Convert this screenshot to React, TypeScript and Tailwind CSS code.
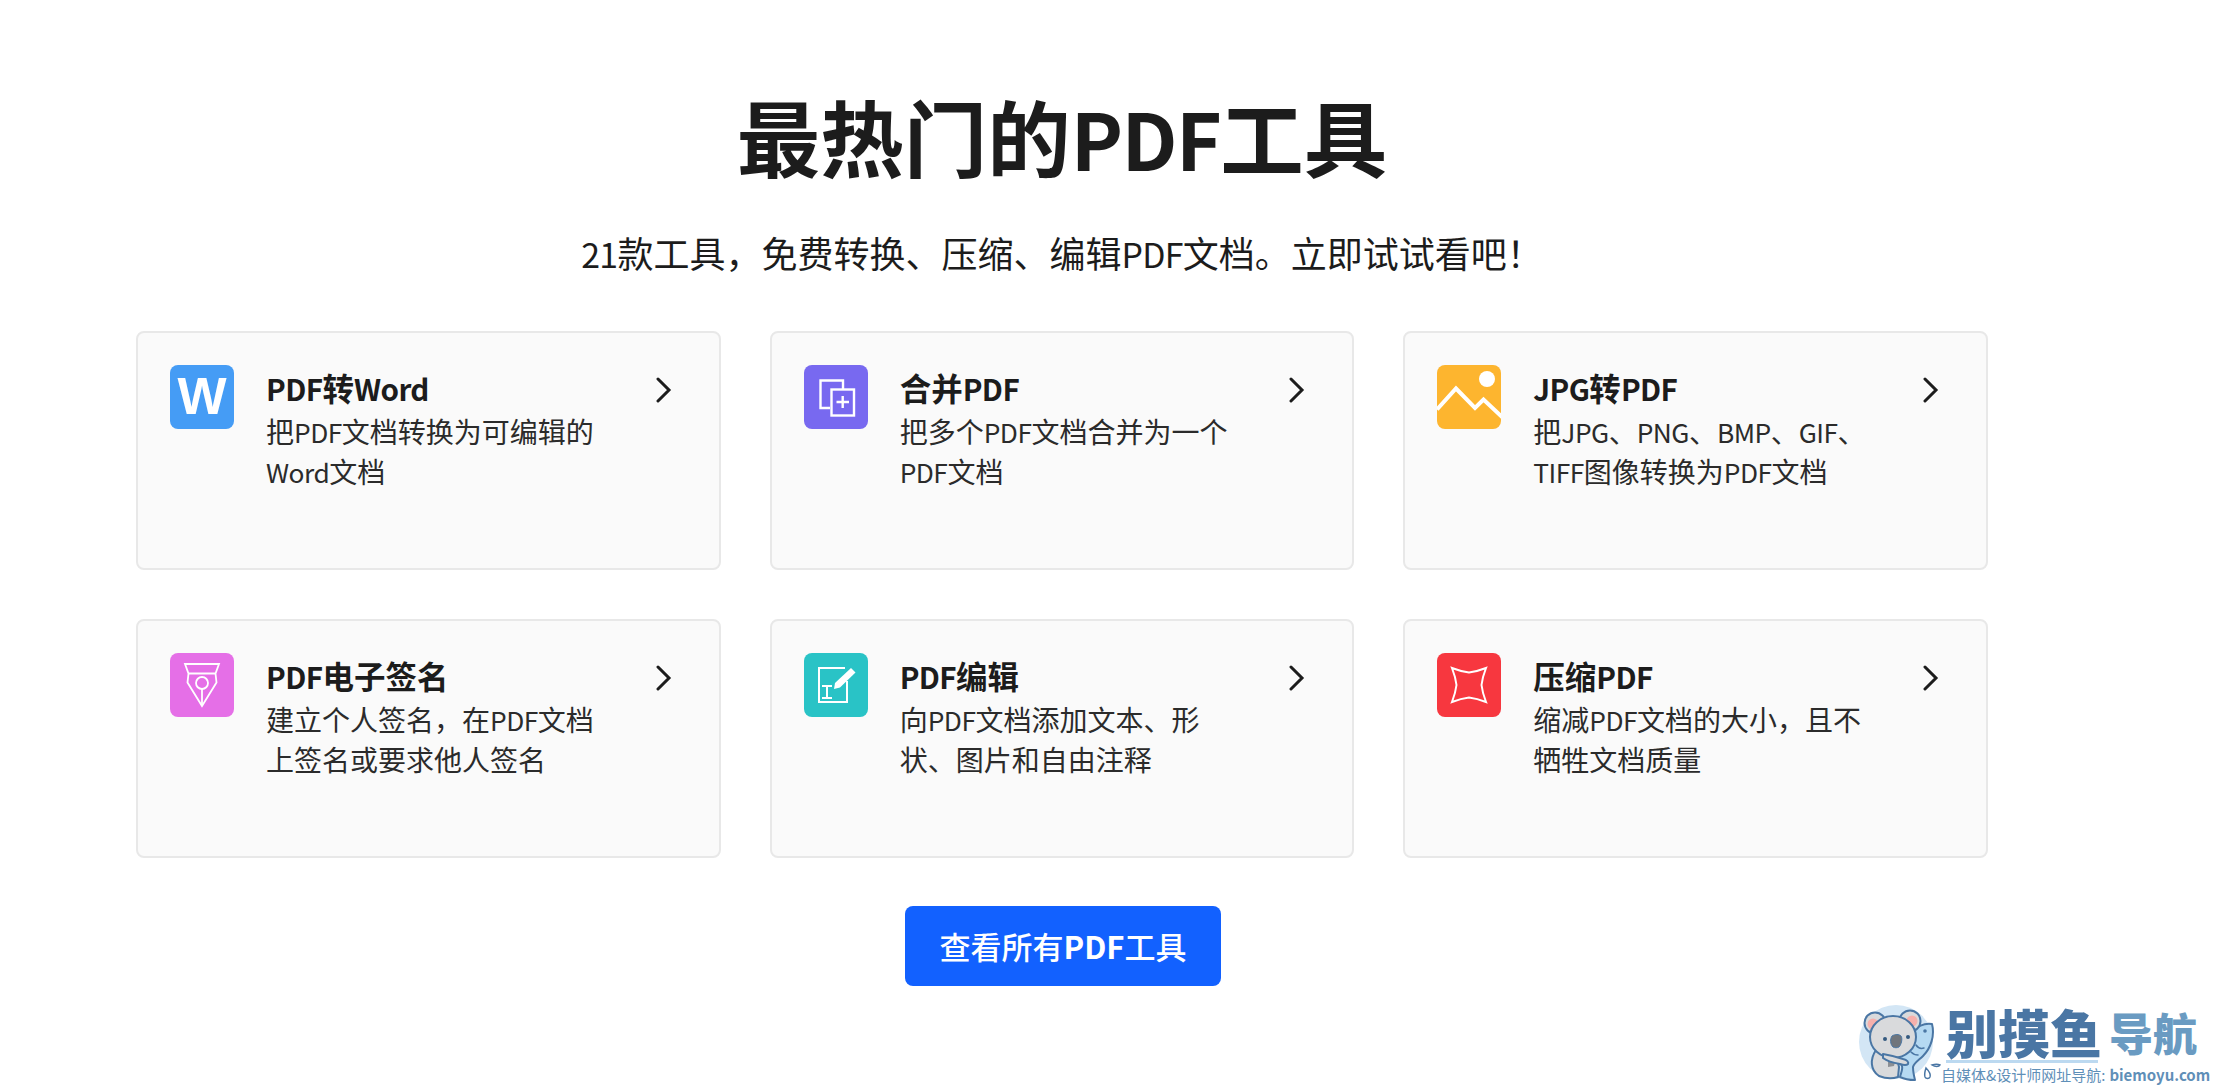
import React from "react";

// Latin runs sit a little narrower than the CJK around them
function Mixed({ text }: { text: string }) {
  return (
    <>
      {text.split(/([A-Za-z0-9]+)/).map((part, i) =>
        i % 2 === 1 ? (
          <span key={i} className="text-[0.94em] tracking-[-0.02em]">
            {part}
          </span>
        ) : (
          part
        ),
      )}
    </>
  );
}

function WordIcon() {
  return (
    <div className="flex h-16 w-16 shrink-0 items-center justify-center rounded-lg bg-[#459cf5] pb-[2px] font-['Liberation_Sans',sans-serif] text-[52px] leading-none font-bold text-white">
      W
    </div>
  );
}

function MergeIcon() {
  return (
    <div className="h-16 w-16 shrink-0 rounded-lg bg-[#7869f0]">
      <svg viewBox="0 0 64 64" className="h-16 w-16" fill="none" stroke="#fff" strokeWidth="2.400">
        <path d="M26 43H16.500V15.500h22.500v9" />
        <rect x="27.500" y="24.500" width="22.500" height="26" />
        <path d="M32.500 37h12.500M38.700 31v12" />
      </svg>
    </div>
  );
}

function ImageIcon() {
  return (
    <div className="h-16 w-16 shrink-0 overflow-hidden rounded-lg bg-[#fdb52f]">
      <svg viewBox="0 0 64 64" className="h-16 w-16" fill="none">
        <circle cx="50" cy="14" r="8" fill="#fff" />
        <path d="M0 44.500L19 23.500l19 19.500 8.500-8.500L66 53" stroke="#fff" strokeWidth="4" />
      </svg>
    </div>
  );
}

function PenIcon() {
  return (
    <div className="h-16 w-16 shrink-0 rounded-lg bg-[#e56fe7]">
      <svg viewBox="0 0 64 64" className="h-16 w-16" fill="none" stroke="#fff" strokeWidth="1.800">
        <path d="M15 11h34l-3.500 9.500H18.500zM18.500 20.500l-1 9L32 53l14.500-23.500-1-9" />
        <circle cx="32" cy="30" r="6" />
        <path d="M32 36v17" />
      </svg>
    </div>
  );
}

function EditIcon() {
  return (
    <div className="h-16 w-16 shrink-0 rounded-lg bg-[#29c3c6]">
      <svg viewBox="0 0 64 64" className="h-16 w-16" fill="none" stroke="#fff" strokeWidth="2">
        <path d="M41 15H15v34h28V28" />
        <path d="M31 30l16-15 4.500 4.500L36 34.500 30 36z" fill="#fff" stroke="none" />
        <path d="M18 33h10M18 45h10M23 33v12" />
      </svg>
    </div>
  );
}

function CompressIcon() {
  return (
    <div className="h-16 w-16 shrink-0 rounded-lg bg-[#f7373f]">
      <svg viewBox="0 0 64 64" className="h-16 w-16" fill="none" stroke="#fff" strokeWidth="2">
        <path d="M15 15Q24 18.500 32 19.500Q40 18.500 49 15Q45.500 24 44.500 32Q45.500 40 49 49Q40 45.500 32 44.500Q24 45.500 15 49Q18.500 40 19.500 32Q18.500 24 15 15Z" />
      </svg>
    </div>
  );
}

function Chevron() {
  return (
    <svg viewBox="0 0 16 26" className="mt-[12px] h-[26px] w-4 shrink-0" fill="none" stroke="#1c1c1c" strokeWidth="3" strokeLinecap="round" strokeLinejoin="miter">
      <path d="M2 2l11 11L2 24" />
    </svg>
  );
}

function KoalaLogo() {
  const line = "#4a76a4";
  return (
    <svg viewBox="0 0 88 88" className="h-[88px] w-[88px] shrink-0">
      <circle cx="38" cy="42" r="37" fill="#d3e6f5" />
      {/* fish */}
      <path d="M74 24c3 11-1 24-9 32-4 4-9 7-10 11 0 4 1 9 2 13-5 0-11-1-15-3 1-4 3-8 2-11-4-4-3-10 0-16 3-8 7-13 11-19 5-5 12-8 19-7z" fill="#b5d9f2" stroke={line} strokeWidth="2" strokeLinejoin="round" />
      <circle cx="67" cy="31" r="1.800" fill={line} />
      <path d="M58 45c2 3 5 4 8 3M53 52c2 2 4 3 7 3" fill="none" stroke={line} strokeWidth="1.500" strokeLinecap="round" />
      {/* body */}
      <path d="M18 50c-6 9-6 20 3 26 5 2 13 3 19 1l1-10-4-17z" fill="#d9dadc" stroke={line} strokeWidth="2" />
      <path d="M30 56l8 2-2 8-6 1z" fill="#8c8f94" />
      {/* ears and head */}
      <circle cx="17" cy="23" r="10.500" fill="#d9dadc" stroke={line} strokeWidth="2" />
      <circle cx="15" cy="24" r="5.500" fill="#f6b0ac" />
      <circle cx="52" cy="21" r="10.500" fill="#d9dadc" stroke={line} strokeWidth="2" />
      <circle cx="54" cy="21" r="5.500" fill="#f6b0ac" />
      <ellipse cx="35" cy="37" rx="23" ry="21" fill="#d9dadc" stroke={line} strokeWidth="2" />
      <circle cx="27" cy="39" r="2" fill="#34597f" />
      <circle cx="50" cy="37" r="2" fill="#34597f" />
      <path d="M34 36c3-2 7-2 9 0 2 3 0 9-2 11-2 1-4 1-6 0-3-3-3-8-1-11z" fill="#70757c" stroke={line} strokeWidth="1" />
      {/* arm */}
      <path d="M25 54c6 1 14 3 20 5 4 1 6 3 5 5-2 2-5 1-8 0-6-1-13-3-17-6z" fill="#d9dadc" stroke={line} strokeWidth="2" strokeLinejoin="round" />
      {/* splash */}
      <path d="M68 68c3 3 5 6 4 9-1 2-4 2-5 0-1-3 0-6 1-9z" fill="none" stroke={line} strokeWidth="1.500" />
      <path d="M74 65c3-1 6-1 8 0-1 2-5 2-8 0z" fill="none" stroke={line} strokeWidth="1.500" />
    </svg>
  );
}

const tools = [
  { icon: <WordIcon />, title: "PDF转Word", lines: ["把PDF文档转换为可编辑的", "Word文档"] },
  { icon: <MergeIcon />, title: "合并PDF", lines: ["把多个PDF文档合并为一个", "PDF文档"] },
  { icon: <ImageIcon />, title: "JPG转PDF", lines: ["把JPG、PNG、BMP、GIF、", "TIFF图像转换为PDF文档"] },
  { icon: <PenIcon />, title: "PDF电子签名", lines: ["建立个人签名\uFF0C在PDF文档", "上签名或要求他人签名"] },
  { icon: <EditIcon />, title: "PDF编辑", lines: ["向PDF文档添加文本、形", "状、图片和自由注释"] },
  { icon: <CompressIcon />, title: "压缩PDF", lines: ["缩减PDF文档的大小\uFF0C且不", "牺牲文档质量"] },
];

export default function App() {
  return (
    <div className="relative h-[1088px] w-full overflow-hidden bg-white font-['Noto_Sans_CJK_SC','Noto_Sans',sans-serif] text-[#1c1c1c]">
      <div className="ml-[136px] flex w-[1852px] flex-col items-center pt-[80px]">
        <h1 className="text-[83.500px] leading-[110px] font-bold">
          <Mixed text="最热门的PDF工具" />
        </h1>
        <p className="mt-[35px] text-[36px] leading-[50px]">
          <Mixed text={"21款工具\uFF0C免费转换、压缩、编辑PDF文档。立即试试看吧\uFF01"} />
        </p>

        <div className="mt-[52px] grid w-full grid-cols-3 gap-x-[49px] gap-y-[49px]">
          {tools.map((tool) => (
            <a
              key={tool.title}
              href="#"
              className="flex h-[239px] gap-8 rounded-lg border-2 border-[#e8e8e8] bg-[#fafafa] pt-[32px] pr-[47px] pl-[32px]"
            >
              {tool.icon}
              <div className="flex-1">
                <div className="h-[44px] text-[31.500px] leading-[44px] font-bold">
                  <Mixed text={tool.title} />
                </div>
                <div className="mt-[2px] text-[28px] leading-[40px] whitespace-nowrap text-[#2b2b2b]">
                  {tool.lines.map((line) => (
                    <div key={line} className="h-[40px]">
                      <Mixed text={line} />
                    </div>
                  ))}
                </div>
              </div>
              <Chevron />
            </a>
          ))}
        </div>

        <a
          href="#"
          className="mt-[48px] ml-[2px] flex h-[80px] w-[316px] items-center justify-center rounded-lg bg-[#1261ff] text-[31px] font-medium text-white"
        >
          查看所有<span className="font-bold">PDF</span>工具
        </a>
      </div>

      <div className="absolute top-[1000px] left-[1858px] flex w-[360px] items-center">
        <KoalaLogo />
        <div className="flex flex-col">
          <div className="flex h-[56px] items-center gap-[7px]">
            <span className="text-[52px] leading-[56px] font-black text-[#4a76a4]">别摸鱼</span>
            <span className="text-[44px] leading-[56px] font-black text-[#6a9bc2]">导航</span>
          </div>
          <div className="h-[3px] w-[152px] bg-[#bcd9f0]" />
          <div className="mt-[2px] -ml-[5px] flex gap-[4px] text-[15px] leading-[20px] whitespace-nowrap text-[#5f8fb8]">
            <span>自媒体&设计师网址导航:</span>
            <span className="font-bold">biemoyu.com</span>
          </div>
        </div>
      </div>
    </div>
  );
}
